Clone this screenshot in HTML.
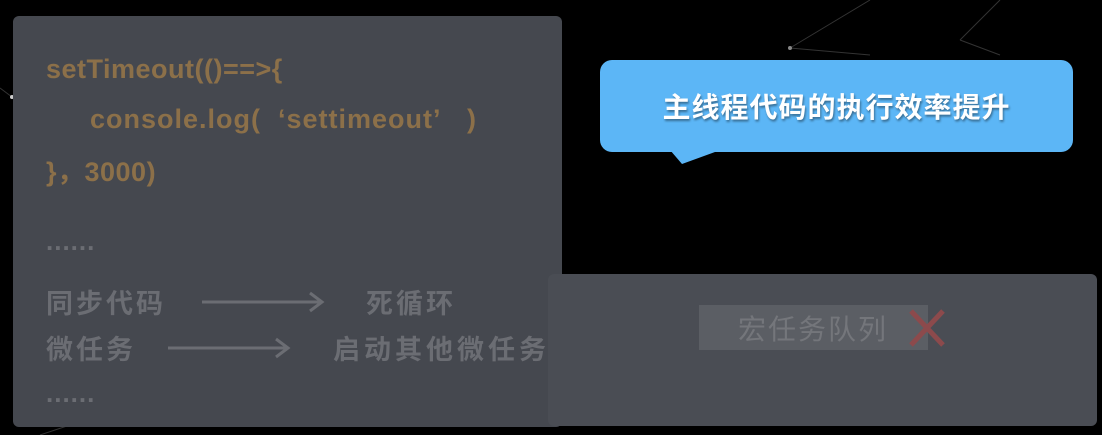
<!DOCTYPE html>
<html><head><meta charset="utf-8"><style>
body{margin:0;width:1102px;height:435px;background:#000;position:relative;overflow:hidden;font-family:"Liberation Sans","Noto Sans CJK SC",sans-serif}
.p{position:absolute;background:#45484f;border-radius:6px}
.c{position:absolute;color:#8c7049;font-weight:bold;font-size:27px;font-family:"Liberation Sans","Noto Sans CJK SC",sans-serif;white-space:nowrap;letter-spacing:0.5px}
.g{position:absolute;color:#6b6d73;font-weight:bold;font-size:27px;letter-spacing:3px;white-space:nowrap;font-family:"Noto Sans CJK SC",sans-serif;line-height:34px}
.d{position:absolute;color:#6b6d73;font-size:26px;letter-spacing:1px;font-weight:bold}
</style></head><body>
<svg style="position:absolute;left:0;top:0" width="1102" height="435">
<g stroke="#333" stroke-width="1"><line x1="790" y1="48" x2="870" y2="0"/><line x1="790" y1="48" x2="870" y2="55"/><line x1="960" y1="40" x2="1000" y2="0"/><line x1="960" y1="40" x2="1000" y2="55"/><line x1="0" y1="88" x2="12" y2="97"/><line x1="40" y1="435" x2="70" y2="425"/></g>
<circle cx="12" cy="97" r="2" fill="#ccc"/><circle cx="790" cy="48" r="2" fill="#888"/>
</svg>
<div class="p" style="left:13px;top:16px;width:549px;height:411px"></div>
<div class="p" style="left:548px;top:274px;width:549px;height:152px;background:#4a4d54"></div>
<div class="c" style="left:46px;top:54px">setTimeout(()==&gt;{</div>
<div class="c" style="left:90px;top:104px;letter-spacing:1px">console.log(&nbsp;&nbsp;‘settimeout’&nbsp;&nbsp;&nbsp;)</div>
<div class="c" style="left:46px;top:150px">}，3000)</div>
<div class="d" style="left:46px;top:226px">......</div>
<div class="g" style="left:46px;top:285px">同步代码</div>
<svg style="position:absolute;left:200px;top:290px" width="140" height="24"><path d="M2 12H120M110 3L122 12L110 21" stroke="#6b6d73" stroke-width="3" fill="none"/></svg>
<div class="g" style="left:366px;top:285px">死循环</div>
<div class="g" style="left:46px;top:331px">微任务</div>
<svg style="position:absolute;left:166px;top:336px" width="140" height="24"><path d="M2 12H120M110 3L122 12L110 21" stroke="#6b6d73" stroke-width="3" fill="none"/></svg>
<div class="g" style="left:333px;top:331px;letter-spacing:4px">启动其他微任务</div>
<div class="d" style="left:46px;top:378px">......</div>
<div style="position:absolute;left:699px;top:305px;width:229px;height:45px;background:#5b5e64"></div>
<div class="g" style="left:738px;top:311px;color:#74767b;font-weight:normal;font-size:28px;letter-spacing:2px">宏任务队列</div>
<svg style="position:absolute;left:908px;top:308px" width="38" height="40"><path d="M3 3L35 37M35 3L3 37" stroke="#8c4a4c" stroke-width="5"/></svg>
<div style="position:absolute;left:600px;top:60px;width:473px;height:92px;background:#5cb6f6;border-radius:12px"></div>
<svg style="position:absolute;left:670px;top:150px" width="60" height="20"><path d="M0 0L12 14L45 2Z" fill="#5cb6f6"/></svg>
<div style="position:absolute;left:600px;top:86px;width:473px;text-align:center;color:#fff;font-weight:bold;font-size:28px;letter-spacing:1px;font-family:'Noto Sans CJK SC',sans-serif;text-shadow:1px 2px 2px rgba(0,0,0,.4);line-height:40px">主线程代码的执行效率提升</div>
</body></html>
